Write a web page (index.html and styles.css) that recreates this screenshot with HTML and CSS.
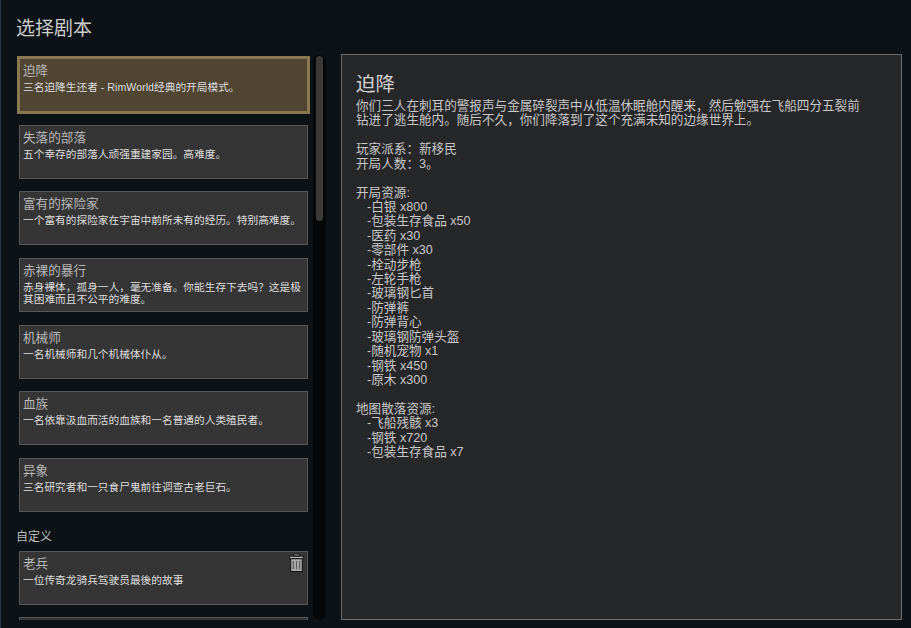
FILE: index.html
```html
<!DOCTYPE html>
<html lang="zh">
<head>
<meta charset="utf-8">
<title>选择剧本</title>
<link rel="stylesheet" href="styles.css">
</head>
<body>
<div class="page">
  <h1 class="title">选择剧本</h1>
  <div class="main">
    <div class="left">
      <div class="list">
        <div class="card selected"><div class="name">迫降</div><div class="desc">三名迫降生还者 - RimWorld经典的开局模式。</div></div>
        <div class="card"><div class="name">失落的部落</div><div class="desc">五个幸存的部落人顽强重建家园。高难度。</div></div>
        <div class="card"><div class="name">富有的探险家</div><div class="desc">一个富有的探险家在宇宙中前所未有的经历。特别高难度。</div></div>
        <div class="card"><div class="name">赤裸的暴行</div><div class="desc">赤身裸体，孤身一人，毫无准备。你能生存下去吗？这是极其困难而且不公平的难度。</div></div>
        <div class="card"><div class="name">机械师</div><div class="desc">一名机械师和几个机械体仆从。</div></div>
        <div class="card"><div class="name">血族</div><div class="desc">一名依靠汲血而活的血族和一名普通的人类殖民者。</div></div>
        <div class="card"><div class="name">异象</div><div class="desc">三名研究者和一只食尸鬼前往调查古老巨石。</div></div>
        <div class="section">自定义</div>
        <div class="card custom"><div class="name">老兵</div><div class="desc">一位传奇龙骑兵驾驶员最後的故事</div>
          <svg class="trash" viewBox="0 0 14 18" aria-hidden="true"><path d="M.5 3h13v2.500H.5zM4.500 1h5v2h-5z" fill="#b8b8b8" stroke="#141414" stroke-width=".9"/><path d="M1.500 5.500h11V17.500h-11z" fill="#adadad" stroke="#141414"/><path d="M4 7.500v8M7 7.500v8M10 7.500v8" stroke="#5e5e5e" stroke-width="1.200"/></svg>
        </div>
        <div class="card"></div>
      </div>
      <div class="track"><div class="thumb"></div></div>
    </div>
    <div class="detail">
      <h2 class="detail-title">迫降</h2>
      <p class="line">你们三人在刺耳的警报声与金属碎裂声中从低温休眠舱内醒来，然后勉强在飞船四分五裂前<br>钻进了逃生舱内。随后不久，你们降落到了这个充满未知的边缘世界上。</p>
      <p class="block">玩家派系：新移民<br>开局人数：3。</p>
      <p class="block">开局资源:</p>
      <ul class="items">
        <li>-白银 x800</li><li>-包装生存食品 x50</li><li>-医药 x30</li><li>-零部件 x30</li><li>-栓动步枪</li><li>-左轮手枪</li><li>-玻璃钢匕首</li><li>-防弹裤</li><li>-防弹背心</li><li>-玻璃钢防弹头盔</li><li>-随机宠物 x1</li><li>-钢铁 x450</li><li>-原木 x300</li>
      </ul>
      <p class="block">地图散落资源:</p>
      <ul class="items">
        <li>-飞船残骸 x3</li><li>-钢铁 x720</li><li>-包装生存食品 x7</li>
      </ul>
    </div>
  </div>
</div>
</body>
</html>
```

FILE: styles.css
```css
* { box-sizing: border-box; margin: 0; padding: 0; }
html, body { height: 100%; }
body {
  background: #0c1216;
  color: #cfcfcf;
  font-family: "Liberation Sans", "Noto Sans CJK SC", sans-serif;
  overflow: hidden;
}
.page {
  width: 911px;
  height: 628px;
  padding: 16px 10px 8px 16px;
  border-left: 1px solid #2a3545;
  display: flex;
  flex-direction: column;
  overflow: hidden;
}
.title {
  font-size: 19px;
  font-weight: 400;
  line-height: 26px;
  color: #cdcdcd;
  margin-left: -1px;
  height: 38px;
}
.main { display: flex; flex: 1; min-height: 0; }
.left { display: flex; width: 324px; flex: none; height: 566px; }
.list { width: 298px; flex: none; padding: 4px 0 0 2px; overflow: hidden; }
.card {
  position: relative;
  width: 289px;
  height: 54px;
  margin-bottom: 12.67px;
  padding: 4px 0 0 3px;
  background: #353535;
  border: 1px solid #545658;
}
.card.selected {
  background: #504432;
  border-color: #504432;
  outline: 3px solid #8a7850;
  outline-offset: -1px;
}
.name { font-size: 12.600px; line-height: 17px; color: #b8b8b8; }
.desc { font-size: 10.700px; line-height: 12.500px; color: #dedede; margin-top: 1px; }
.section { font-size: 12px; line-height: 17px; color: #bdbdbd; padding-top: 4px; margin: 0 0 5px -3px; }
.trash { position: absolute; top: 1px; right: 3px; width: 15px; height: 19px; }
.track {
  width: 13px;
  height: 565px;
  margin-left: -2px;
  margin-top: 1px;
  background: #060709;
  border-radius: 7px;
  padding: 1px 3px;
  flex: none;
}
.thumb { width: 7px; height: 165px; background: #3a3a3a; border-radius: 4px; }
.detail {
  flex: none;
  width: 561px;
  height: 566px;
  background: #262729;
  border: 1px solid #6a6c6e;
  padding: 16px 14px;
  font-size: 12.600px;
  line-height: 14.420px;
  color: #c8c8c8;
}
.detail-title { font-size: 19.500px; font-weight: 400; line-height: 26px; color: #d2d2d2; margin-bottom: 2px; }
.block { margin-top: 14.420px; }
.items { list-style: none; padding-left: 11px; }
```
